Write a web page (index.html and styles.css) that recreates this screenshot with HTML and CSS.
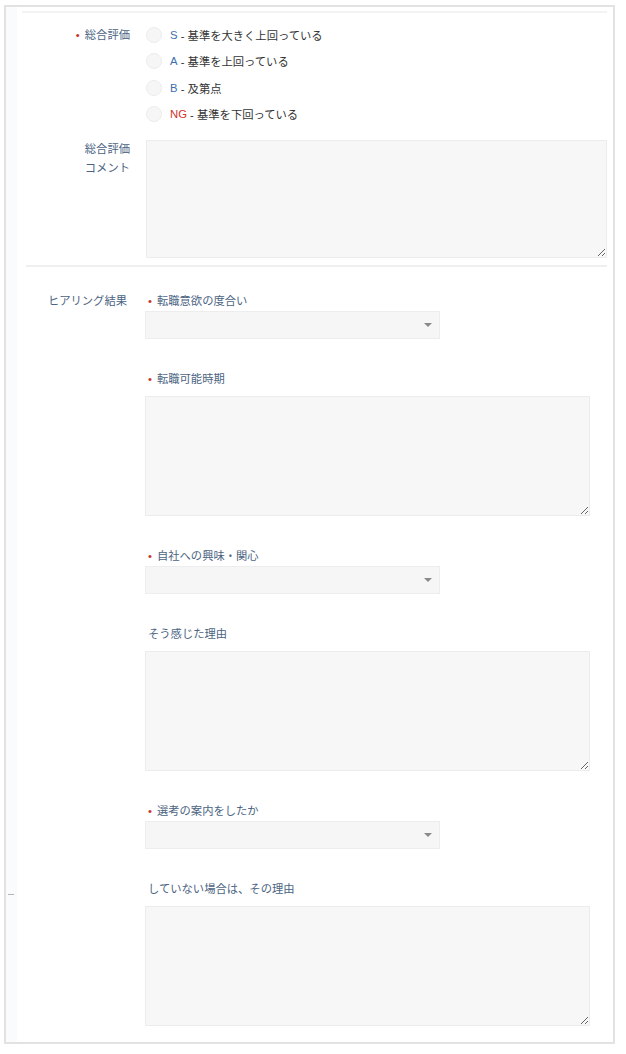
FILE: index.html
```html
<!DOCTYPE html>
<html lang="ja">
<head>
<meta charset="utf-8">
<link rel="stylesheet" href="styles.css">
</head>
<body>
  <div class="frame">
    <span class="edge-mark"></span>
    <div class="topline"></div>

    <section class="row rating">
      <div class="label"><span class="req">•</span>総合評価</div>
      <div class="radios">
        <label class="radio"><input type="radio" name="rank"><span class="grade blue">S</span>&nbsp;- 基準を大きく上回っている</label>
        <label class="radio"><input type="radio" name="rank"><span class="grade blue">A</span>&nbsp;- 基準を上回っている</label>
        <label class="radio"><input type="radio" name="rank"><span class="grade blue">B</span>&nbsp;- 及第点</label>
        <label class="radio"><input type="radio" name="rank"><span class="grade red">NG</span>&nbsp;- 基準を下回っている</label>
      </div>
    </section>

    <section class="row comment">
      <div class="label stack">総合評価<br>コメント</div>
      <textarea class="area wide"></textarea>
    </section>

    <div class="divider"></div>

    <section class="row hearing">
      <div class="label">ヒアリング結果</div>
      <div class="fields">
        <div class="field">
          <div class="flabel"><span class="req">•</span>転職意欲の度合い</div>
          <div class="select"><select></select></div>
        </div>
        <div class="field">
          <div class="flabel"><span class="req">•</span>転職可能時期</div>
          <textarea class="area"></textarea>
        </div>
        <div class="field">
          <div class="flabel"><span class="req">•</span>自社への興味・関心</div>
          <div class="select"><select></select></div>
        </div>
        <div class="field">
          <div class="flabel">そう感じた理由</div>
          <textarea class="area"></textarea>
        </div>
        <div class="field">
          <div class="flabel"><span class="req">•</span>選考の案内をしたか</div>
          <div class="select"><select></select></div>
        </div>
        <div class="field">
          <div class="flabel">していない場合は、その理由</div>
          <textarea class="area"></textarea>
        </div>
      </div>
    </section>
  </div>
</body>
</html>
```

FILE: styles.css
```css
* {
    margin: 0;
    padding: 0;
    box-sizing: border-box;
}
body
{
    background: #fff;
    font-family: "Liberation Sans", "Noto Sans CJK JP", sans-serif;
    font-size: 11.3px;
    color: #333;
}
.frame
{
    position: relative;
    width: 611px;
    height: 1039px;
    margin: 5px 0 0 4px;
    padding: 0 6px 0 0;
    border: 2px solid #e2e2e2;
    background: linear-gradient(to right, #fafbfd 11px, #fff 11px);
}
.edge-mark
{
    position: absolute;
    left: 2px;
    top: 887px;
    width: 6px;
    height: 1px;
    background: #b5b5b5;
}
.topline
{
    height: 2px;
    margin: 4px 0 0 16px;
    background: #f3f3f3;
}
.row
{
    display: grid;
    grid-template-columns: 124px 1fr;
    column-gap: 16px;
}
.label
{
    text-align: right;
    color: #4b6482;
}
.req
{
    color: #c9302c;
    margin-right: 5px;
}
/* rating */
.rating
{
    margin-top: 9px;
}
.rating .label
{
    line-height: 26px;
}
.radio
{
    display: flex;
    align-items: center;
    height: 26.33px;
    color: #333;
}
.radio input
{
    appearance: none;
    width: 16px;
    height: 16px;
    border-radius: 50%;
    background: #f6f6f6;
    border: 1px solid #ececec;
    margin-right: 8px;
}
.grade.blue { color: #3d6fae; }
.grade.red { color: #d0342c; }
/* comment */
.comment
{
    margin-top: 13px;
}
.label.stack
{
    line-height: 19px;
}
.area
{
    display: block;
    width: 445px;
    height: 120px;
    background: #f7f7f7;
    border: 1px solid #ececec;
    border-radius: 0;
    resize: vertical;
}
.area.wide
{
    width: 461px;
    height: 118px;
}
.divider
{
    height: 2px;
    margin: 7px 0 0 20px;
    background: #efefef;
}
/* hearing */
.hearing
{
    margin-top: 26px;
}
.hearing .label
{
    line-height: 16px;
    padding-right: 3px;
}
.field + .field
{
    margin-top: 32px;
}
.flabel
{
    line-height: 16px;
    color: #4b6482;
    padding-left: 2px;
}
.select
{
    position: relative;
    width: 295px;
    height: 28px;
    margin: 2px 0 0 -1px;
}
.select select
{
    appearance: none;
    width: 100%;
    height: 100%;
    background: #f6f6f6;
    border: 1px solid #ededed;
    border-radius: 0;
}
.select::after
{
    content: "";
    position: absolute;
    right: 8px;
    top: 12px;
    border-left: 4px solid transparent;
    border-right: 4px solid transparent;
    border-top: 4px solid #8a8a8a;
}
.field .area
{
    margin: 9px 0 0 -1px;
}
```
